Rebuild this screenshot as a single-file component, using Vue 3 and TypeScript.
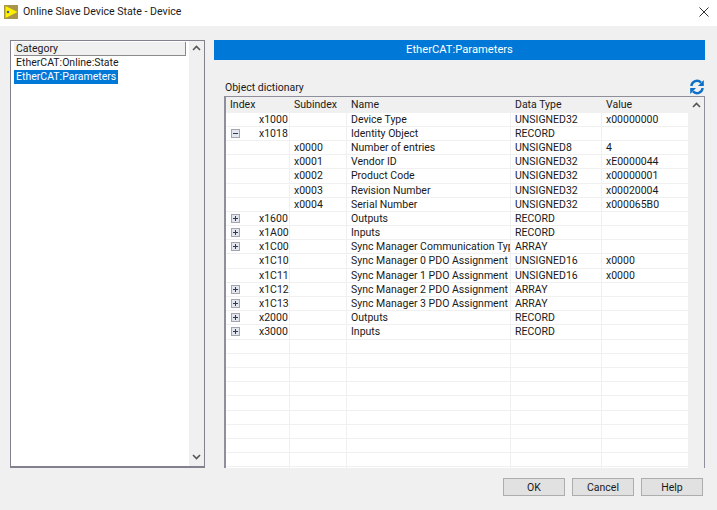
<script setup lang="ts">
interface Row {
  index?: string;
  sub?: string;
  name?: string;
  type?: string;
  value?: string;
  tree?: "plus" | "minus";
}

const rows: Row[] = [
  { index: "x1000", name: "Device Type", type: "UNSIGNED32", value: "x00000000" },
  { index: "x1018", name: "Identity Object", type: "RECORD", tree: "minus" },
  { sub: "x0000", name: "Number of entries", type: "UNSIGNED8", value: "4" },
  { sub: "x0001", name: "Vendor ID", type: "UNSIGNED32", value: "xE0000044" },
  { sub: "x0002", name: "Product Code", type: "UNSIGNED32", value: "x00000001" },
  { sub: "x0003", name: "Revision Number", type: "UNSIGNED32", value: "x00020004" },
  { sub: "x0004", name: "Serial Number", type: "UNSIGNED32", value: "x000065B0" },
  { index: "x1600", name: "Outputs", type: "RECORD", tree: "plus" },
  { index: "x1A00", name: "Inputs", type: "RECORD", tree: "plus" },
  { index: "x1C00", name: "Sync Manager Communication Type", type: "ARRAY", tree: "plus" },
  { index: "x1C10", name: "Sync Manager 0 PDO Assignment", type: "UNSIGNED16", value: "x0000" },
  { index: "x1C11", name: "Sync Manager 1 PDO Assignment", type: "UNSIGNED16", value: "x0000" },
  { index: "x1C12", name: "Sync Manager 2 PDO Assignment", type: "ARRAY", tree: "plus" },
  { index: "x1C13", name: "Sync Manager 3 PDO Assignment", type: "ARRAY", tree: "plus" },
  { index: "x2000", name: "Outputs", type: "RECORD", tree: "plus" },
  { index: "x3000", name: "Inputs", type: "RECORD", tree: "plus" },
  ...Array.from({ length: 10 }, () => ({})),
];

const categories = ["EtherCAT:Online:State", "EtherCAT:Parameters"];
const selected = 1;
const buttons = ["OK", "Cancel", "Help"];
</script>

<template>
  <div class="window">
    <header class="titlebar">
      <svg class="app-icon" width="14" height="14" viewBox="0 0 14 14">
        <rect width="14" height="14" fill="#a8954a" />
        <path d="M1.5 1 L13.5 7 L1.5 13 Z" fill="#fff200" />
        <circle cx="4" cy="7" r="1.3" fill="#4f55a8" />
      </svg>
      <span class="title">Online Slave Device State - Device</span>
      <svg class="close" width="10" height="10" viewBox="0 0 10 10">
        <path d="M0.5 0.5 L9.5 9.5 M9.5 0.5 L0.5 9.5" stroke="#333" stroke-width="1" fill="none" />
      </svg>
    </header>

    <main class="content">
      <section class="category">
        <div class="category-list">
          <div class="category-head">Category</div>
          <div
            v-for="(item, i) in categories"
            :key="item"
            class="category-item"
          >
            <span :class="{ selected: i === selected }">{{ item }}</span>
          </div>
        </div>
        <div class="scrollbar">
          <svg width="9" height="6" viewBox="0 0 9 6"><path d="M1 5 L4.5 1.5 L8 5" stroke="#555" stroke-width="1.6" fill="none" /></svg>
          <svg width="9" height="6" viewBox="0 0 9 6"><path d="M1 1 L4.5 4.5 L8 1" stroke="#555" stroke-width="1.6" fill="none" /></svg>
        </div>
      </section>

      <section class="details">
        <div class="banner">EtherCAT:Parameters</div>
        <div class="dict-head">
          <span>Object dictionary</span>
          <svg width="16" height="16" viewBox="0 0 16 16">
            <path d="M2.4 7 A5.6 5.6 0 0 1 12 3.6" stroke="#0c70c8" stroke-width="2.4" fill="none" />
            <path d="M14.8 1 V7 H9 Z" fill="#0c70c8" />
            <path d="M13.6 9 A5.6 5.6 0 0 1 4 12.4" stroke="#0c70c8" stroke-width="2.4" fill="none" />
            <path d="M1.2 15 V9 H7 Z" fill="#0c70c8" />
          </svg>
        </div>
        <div class="table-box">
          <div class="table">
            <div class="row head">
              <div class="cell">Index</div>
              <div class="cell">Subindex</div>
              <div class="cell">Name</div>
              <div class="cell">Data Type</div>
              <div class="cell">Value</div>
            </div>
            <div v-for="(row, i) in rows" :key="i" class="row">
              <div class="cell index">
                <svg v-if="row.tree" class="tree" width="9" height="9" viewBox="0 0 9 9">
                  <rect x="0.5" y="0.5" width="8" height="8" fill="#e4e6ee" stroke="#a2a4b0" />
                  <path v-if="row.tree === 'plus'" d="M2 4.5 H7 M4.5 2 V7" stroke="#2c3a5c" fill="none" />
                  <path v-else d="M2 4.5 H7" stroke="#2c3a5c" fill="none" />
                </svg>
                <span class="index-text">{{ row.index }}</span>
              </div>
              <div class="cell">{{ row.sub }}</div>
              <div class="cell">{{ row.name }}</div>
              <div class="cell">{{ row.type }}</div>
              <div class="cell">{{ row.value }}</div>
            </div>
          </div>
          <div class="scrollbar">
            <svg width="9" height="6" viewBox="0 0 9 6"><path d="M1 5 L4.5 1.5 L8 5" stroke="#555" stroke-width="1.6" fill="none" /></svg>
          </div>
        </div>
      </section>
    </main>

    <footer class="footer">
      <button v-for="b in buttons" :key="b" class="btn">{{ b }}</button>
    </footer>
  </div>
</template>

<style scoped>
.window {
  width: 717px;
  height: 510px;
  display: flex;
  flex-direction: column;
  background: #f0f0f0;
  color: #1a1a1a;
  font-family: Roboto, "Open Sans", sans-serif;
  font-size: 10.5px;
  overflow: hidden;
}

.titlebar {
  height: 26px;
  flex: none;
  background: #fff;
  display: flex;
  align-items: center;
  padding: 0 8px 3px 4px;
  box-sizing: border-box;
  gap: 5px;
}

.title {
  flex: 1;
  font-size: 10.6px;
}

.content {
  flex: none;
  height: 442px;
  display: flex;
  gap: 9px;
  padding: 14px 12px 0 10px;
  box-sizing: border-box;
}

.category {
  width: 195px;
  height: 428px;
  flex: none;
  box-sizing: border-box;
  display: flex;
  background: #fff;
  border: 1px solid #82828f;
  border-bottom-width: 2px;
}

.category-list {
  flex: 1;
  padding: 1px 3px 0 3px;
}

.category-head {
  height: 13px;
  line-height: 13px;
  padding-left: 2px;
  background: #f0f0f0;
  border-bottom: 1px solid #8a8a8a;
  border-right: 1px solid #8a8a8a;
}

.category-item {
  height: 14px;
  line-height: 14px;
}

.category-item span {
  display: inline-block;
  padding: 0 2px;
}

.selected {
  background: #0078d7;
  color: #fff;
}

.scrollbar {
  width: 15px;
  flex: none;
  background: #f0f0f0;
  display: flex;
  flex-direction: column;
  justify-content: space-between;
  align-items: center;
  padding: 4px 0 6px;
  box-sizing: border-box;
}

.details {
  flex: 1;
  min-width: 0;
}

.banner {
  height: 20px;
  line-height: 20px;
  background: #0078d7;
  color: #fff;
  text-align: center;
  font-size: 11.2px;
}

.dict-head {
  display: flex;
  justify-content: space-between;
  align-items: center;
  height: 16px;
  margin-top: 19px;
  padding-left: 11px;
}

.table-box {
  margin-left: 10px;
  margin-top: 1px;
  height: 372px;
  box-sizing: border-box;
  display: flex;
  border-left: 2px solid #8f8f9c;
  border-top: 1px solid #8f8f9c;
  border-right: 1px solid #8f8f9c;
  padding-top: 1.4px;
  overflow: hidden;
}

.table {
  flex: 1;
  min-width: 0;
  background: #fff;
}

.row {
  display: grid;
  grid-template-columns: 64px 57px 164px 91px 87px;
  height: 14.2px;
  line-height: 14px;
  border-bottom: 1px solid #f0f0f0;
  box-sizing: border-box;
}

.head {
  background: #f0f0f0;
}

.cell {
  padding-left: 4px;
  overflow: hidden;
  white-space: nowrap;
  border-right: 1px solid #f0f0f0;
  box-sizing: border-box;
}

.index {
  position: relative;
  text-align: right;
  padding-right: 2px;
}

.index-text {
  display: inline-block;
  width: 28px;
  text-align: left;
}

.tree {
  position: absolute;
  left: 5px;
  top: 2px;
}

.footer {
  flex: 1;
  display: flex;
  justify-content: flex-end;
  align-items: flex-start;
  gap: 7px;
  padding: 10px 14px 0 0;
}

.btn {
  width: 62px;
  height: 18px;
  padding: 0;
  background: #e1e1e1;
  border: 1px solid #adadad;
  font: inherit;
  color: #1a1a1a;
}
</style>
